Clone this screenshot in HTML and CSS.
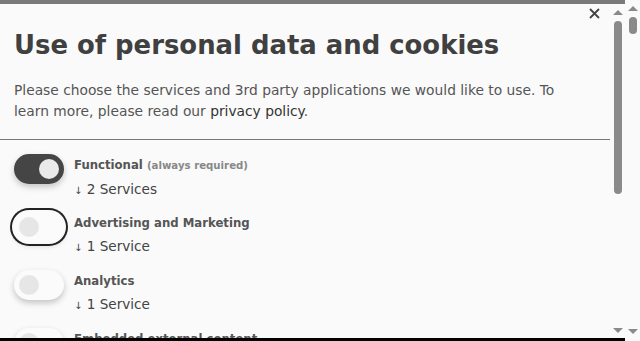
FILE: index.html
```html
<!DOCTYPE html>
<html lang="en">
<head>
<meta charset="utf-8">
<title>Cookies</title>
<link rel="stylesheet" href="styles.css">
</head>
<body>
<div class="page">
  <div class="main">
    <div class="topbar"></div>
    <div class="modal">
      <div class="content">
        <button class="close" aria-label="Close">
          <svg width="11" height="11" viewBox="0 0 11 11"><path d="M1 1L10 10M10 1L1 10" stroke="#444" stroke-width="1.8" fill="none"/></svg>
        </button>
        <header class="head">
          <h1 class="title">Use of personal data and cookies</h1>
          <p class="intro">Please choose the services and 3rd party applications we would like to use. To learn more, please read our <a class="link" href="#">privacy policy</a>.</p>
        </header>
        <hr class="divider">
        <ul class="purposes">
          <li class="purpose">
            <span class="switch on"><span class="knob"></span></span>
            <div class="info">
              <div class="name">Functional <span class="req">(always required)</span></div>
              <div class="count"><span class="arr">↓</span> 2 Services</div>
            </div>
          </li>
          <li class="purpose">
            <span class="switch focus"><span class="knob"></span></span>
            <div class="info">
              <div class="name">Advertising and Marketing</div>
              <div class="count"><span class="arr">↓</span> 1 Service</div>
            </div>
          </li>
          <li class="purpose">
            <span class="switch"><span class="knob"></span></span>
            <div class="info">
              <div class="name">Analytics</div>
              <div class="count"><span class="arr">↓</span> 1 Service</div>
            </div>
          </li>
          <li class="purpose">
            <span class="switch"><span class="knob"></span></span>
            <div class="info">
              <div class="name">Embedded external content</div>
              <div class="count"><span class="arr">↓</span> 1 Service</div>
            </div>
          </li>
        </ul>
      </div>
      <div class="scrollbar inner">
        <span class="arrow up"></span>
        <span class="thumb"></span>
        <span class="spacer"></span>
        <span class="arrow down"></span>
      </div>
    </div>
    <div class="bottombar"></div>
  </div>
  <div class="scrollbar outer">
    <span class="arrow up"></span>
    <span class="thumb"></span>
    <span class="spacer"></span>
    <span class="arrow down"></span>
  </div>
</div>
</body>
</html>
```
FILE: styles.css
```css
html, body {
  margin: 0;
  padding: 0;
  height: 100%;
  overflow: hidden;
}
body {
  background: #fafafa;
  font-family: "DejaVu Sans", "Liberation Sans", sans-serif;
  color: #444;
}
.page {
  display: flex;
  height: 341px;
}
.main {
  width: 625px;
  display: flex;
  flex-direction: column;
}
.topbar {
  height: 4px;
  background: #7a7a7a;
  flex: none;
}
.bottombar {
  height: 3px;
  background: #000;
  flex: none;
}
.modal {
  flex: 1;
  display: flex;
  overflow: hidden;
  position: relative;
}
.content {
  flex: 1;
  overflow: hidden;
  position: relative;
}
.close {
  position: absolute;
  right: 10px;
  top: 4px;
  border: 0;
  background: none;
  padding: 0;
  width: 11px;
  height: 11px;
}
.close svg { display: block; }
.head {
  padding: 24px 14px 0 14px;
}
.title {
  margin: 0;
  font-size: 25.9px;
  line-height: 34px;
  font-weight: bold;
  color: #404040;
}
.intro {
  margin: 18px 0 0 0;
  max-width: 560px;
  font-size: 13.8px;
  line-height: 21px;
  color: #555;
}
.link {
  color: #333;
  text-decoration: none;
}
.divider {
  margin: 17px 0 0 0;
  border: 0;
  height: 1px;
  background: #777;
}
.purposes {
  list-style: none;
  margin: 0;
  padding: 14px 0 0 14px;
}
.purpose {
  display: flex;
  gap: 10px;
  height: 58px;
}
.switch {
  flex: none;
  width: 50px;
  height: 30px;
  border-radius: 15px;
  background: #fbfbfb;
  box-shadow: 0 3px 6px rgba(0,0,0,0.22);
  display: flex;
  align-items: center;
  padding: 0 5px;
  box-sizing: border-box;
}
.switch .knob {
  width: 20px;
  height: 20px;
  border-radius: 50%;
  background: #e6e6e6;
}
.switch.on {
  background: #454545;
  justify-content: flex-end;
}
.switch.on .knob {
  background: #eaeaea;
}
.switch.focus {
  box-shadow: 0 0 0 2px #fafafa, 0 0 0 4px #222, 0 3px 6px rgba(0,0,0,0.2);
}
.info {
  padding-top: 3px;
}
.name {
  font-size: 11.7px;
  font-weight: bold;
  color: #555;
  line-height: 16px;
}
.req {
  font-size: 10.2px;
  color: #888;
}
.count {
  margin-top: 6px;
  font-size: 13.6px;
  color: #444;
  line-height: 18px;
}
.arr {
  font-size: 10px;
}
.scrollbar {
  flex: none;
  width: 15px;
  display: flex;
  flex-direction: column;
  align-items: center;
}
.scrollbar .spacer { flex: 1; }
.arrow {
  width: 0;
  height: 0;
  border-left: 5px solid transparent;
  border-right: 5px solid transparent;
}
.arrow.up {
  border-bottom: 5px solid #8a8a8a;
}
.arrow.down {
  border-top: 5px solid #8a8a8a;
}
.thumb {
  width: 8px;
  background: #8a8a8a;
  border-radius: 4px;
}
.inner .arrow.up { margin-top: 6px; }
.inner .thumb { margin-top: 6px; height: 173px; }
.inner .arrow.down { margin-bottom: 5px; }
.outer .arrow.up { margin-top: 6px; }
.outer .thumb { margin-top: 6px; height: 17px; }
.outer .arrow.down { margin-bottom: 7px; }
```
